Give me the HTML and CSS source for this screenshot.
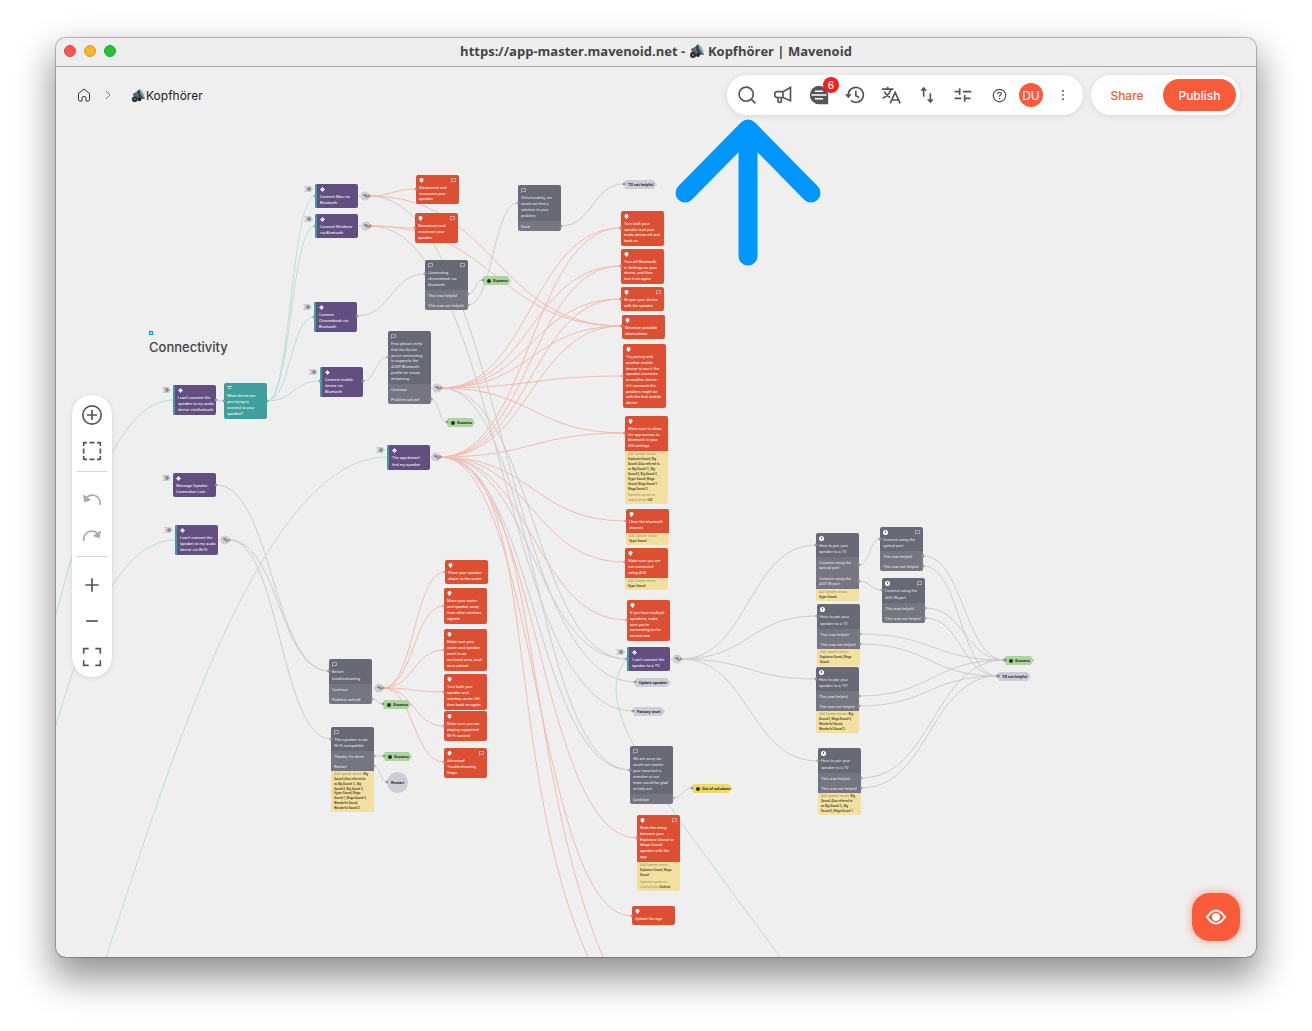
FILE: index.html
```html
<!DOCTYPE html>
<html lang="de">
<head>
<meta charset="UTF-8">
<meta name="viewport" content="width=device-width, initial-scale=1.0">
<title>Kopfhörer | Mavenoid</title>
<link rel="stylesheet" href="styles.css">
</head>
<body>
<svg class="defs" width="0" height="0" aria-hidden="true">
    <symbol id="speaker" viewBox="0 0 16 16">
        <path d="M6 4L9 1L15 12L8 11Z" fill="#3c4a54"/>
        <path d="M9 1Q14 4 15 12Q10 8 9 1Z" fill="#8fa3ae"/>
        <path d="M10 1Q15 4 15 9" fill="none" stroke="#c4e6ee"/>
        <path d="M2 6L6 4L8 11L4 14Z" fill="#59656c"/>
        <circle cx="4" cy="12" r="3" fill="#262c30"/>
        <circle cx="4" cy="12" r="1" fill="#7d878d"/>
        <circle cx="9" cy="12" r="2" fill="#1f2427"/>
    </symbol>
</svg>
<div class="window">
    <div class="titlebar">
        <div class="lights">
            <button class="light close" aria-label="Close"></button>
            <button class="light minimize" aria-label="Minimize"></button>
            <button class="light maximize" aria-label="Maximize"></button>
        </div>
        <div class="title">https://app-master.mavenoid.net - <svg width="16" height="16"><use href="#speaker"/></svg> Kopfhörer | Mavenoid</div>
    </div>

    <div class="workspace">
        <div class="canvas">
            <div class="world">
                <svg class="layer" id="edges" width="1312" height="1031"></svg>
                <div id="nodes"></div>
                <svg class="layer" id="ports" width="1312" height="1031"></svg>
                <h2 class="section-title">Connectivity</h2>
                <svg class="layer" width="1312" height="1031">
                    <rect x="149.500" y="331.500" width="3" height="3" fill="#9bd3ff" stroke="#0096ff"/>
                    <path d="M748 129V256M685 193L748 129L811 193" fill="none" stroke="#0096ff" stroke-width="19" stroke-linecap="round" stroke-linejoin="round"/>
                </svg>
            </div>
        </div>

        <header class="header">
            <nav class="breadcrumb">
                <a href="#" class="home" aria-label="Home">
                    <svg width="14" height="14" viewBox="0 0 14 14"><path d="M1.500 5.500L7 1L12.500 5.500V11.500Q12.500 13 11 13H9V10Q9 8.500 7 8.500Q5 8.500 5 10V13H3Q1.500 13 1.500 11.500Z"/></svg>
                </a>
                <svg class="chevron" width="8" height="10" viewBox="0 0 8 10"><path d="M2 1L6 5L2 9"/></svg>
                <a href="#" class="current"><svg width="15" height="15"><use href="#speaker"/></svg>Kopfhörer</a>
            </nav>
            <div class="tools">
                <button class="tool" aria-label="Search"><svg viewBox="0 0 24 24"><circle cx="11" cy="11" r="8.500"/><path d="M17.500 17.500L22 22"/></svg></button>
                <button class="tool" aria-label="Announcements"><svg viewBox="0 0 24 24"><path d="M21 3V19L12 15H5Q2 15 2 11.500Q2 8 5 8H12ZM12 8V15M6 15V19Q6 21 8 21Q10 21 10 19V15"/></svg></button>
                <button class="tool" aria-label="Comments"><svg viewBox="0 0 24 24"><path class="solid" d="M12 1A11 11 0 1 0 12 23H23V12A11 11 0 0 0 12 1Z"/><path class="cut" d="M7 7.500H17M3 12H21M7 16.500H17"/></svg><span class="badge">6</span></button>
                <button class="tool" aria-label="History"><svg viewBox="0 0 24 24"><path d="M4 12A9 9 0 1 1 7 18.500M13 7V13L17 15"/><path class="solid" d="M0 11H8L4 16Z"/></svg></button>
                <button class="tool" aria-label="Translate"><svg viewBox="0 0 24 24"><path d="M1 5H15M8 2V5M12 5Q10 12 2 16M4 8Q7 13 11 15M11 22L17 9L23 22M13 18H21"/></svg></button>
                <button class="tool" aria-label="Import and export"><svg viewBox="0 0 24 24"><path d="M8 14V4M16 10V20"/><path class="solid" d="M4 7L8 2L12 7ZM12 17L16 22L20 17Z"/></svg></button>
                <button class="tool" aria-label="Settings"><svg viewBox="0 0 24 24"><path d="M2 8H9M8 4V12M12 8H22M2 16H10M14 12V20M14 16H21"/></svg></button>
                <button class="tool small" aria-label="Help"><svg viewBox="0 0 24 24"><circle cx="12" cy="12" r="10"/><path d="M9 10Q9 7 12 7Q15 7 15 9.500Q15 11 12 12.500V14M12 16V18"/></svg></button>
                <button class="avatar">DU</button>
                <button class="tool" aria-label="More"><svg viewBox="0 0 24 24"><path class="solid" d="M11 6h2v2h-2zM11 11h2v2h-2zM11 16h2v2h-2z"/></svg></button>
            </div>
            <div class="actions">
                <button class="share">Share</button>
                <button class="publish">Publish</button>
            </div>
        </header>

        <main class="overlay">
            <div class="sidebar">
                <button class="tool" aria-label="Add"><svg viewBox="0 0 24 24"><circle cx="12" cy="12" r="11"/><path d="M12 6V18M6 12H18"/></svg></button>
                <button class="tool" aria-label="Select area"><svg viewBox="0 0 24 24"><path d="M2 6V2H6M9 2H15M18 2H22V6M22 9V15M22 18V22H18M15 22H9M6 22H2V18M2 15V9"/></svg></button>
                <hr>
                <button class="tool" disabled aria-label="Undo"><svg viewBox="0 0 24 24"><path d="M5 9Q12 4 18 8Q22 11 22 18"/><path class="solid" d="M1 5L3 15L11 12Z"/></svg></button>
                <button class="tool" disabled aria-label="Redo"><svg viewBox="0 0 24 24"><path d="M19 9Q12 4 6 8Q2 11 2 18"/><path class="solid" d="M23 5L21 15L13 12Z"/></svg></button>
                <hr>
                <button class="tool" aria-label="Zoom in"><svg viewBox="0 0 24 24"><path d="M12 4V20M4 12H20"/></svg></button>
                <button class="tool" aria-label="Zoom out"><svg viewBox="0 0 24 24"><path d="M5 12H19"/></svg></button>
                <button class="tool" aria-label="Fit to screen"><svg viewBox="0 0 24 24"><path d="M2 8V2H8M16 2H22V8M22 16V22H16M8 22H2V16"/></svg></button>
            </div>
            <button class="preview" aria-label="Preview"><svg width="20" height="16" viewBox="0 0 20 16"><path d="M1 8Q10 -5 19 8Q10 21 1 8Z" fill="none" stroke="#fff" stroke-width="2"/><circle cx="10" cy="8" r="4" fill="#fff"/></svg></button>
        </main>
    </div>
</div>
<script src="flow.js"></script>
</body>
</html>
```
FILE: styles.css
```css
* {
    box-sizing: border-box;
}
body {
    margin: 0;
    height: 100vh;
    padding: 38px 56px 74px;
    background: #fff;
    font-family: Inter, "Liberation Sans", sans-serif;
    color: #222;
    overflow: hidden;
}
button {
    border: none;
    background: none;
    padding: 0;
    font-family: inherit;
    cursor: pointer;
}
.defs {
    position: absolute;
}
.window {
    height: 100%;
    display: flex;
    flex-direction: column;
    border-radius: 10px;
    background: #efefef;
    overflow: hidden;
    box-shadow: 0 0 1px 1px rgba(0, 0, 0, 0.25), 0 18px 36px 4px rgba(0, 0, 0, 0.42);
}
.titlebar {
    height: 29px;
    display: grid;
    grid-template-columns: 1fr auto 1fr;
    align-items: center;
    padding: 0 8px 2px;
    background: #eee;
    border-bottom: 1px solid #a6a6a6;
}
.lights {
    display: flex;
    gap: 8px;
}
.light {
    width: 12px;
    height: 12px;
    border-radius: 50%;
}
.close {
    background: #ff5350;
    border: 1px solid #e0443e;
}
.minimize {
    background: #fdb42b;
    border: 1px solid #dd9a20;
}
.maximize {
    background: #27c236;
    border: 1px solid #1aaa29;
}
.title {
    display: flex;
    align-items: center;
    font-family: "Open Sans", sans-serif;
    font-size: 13px;
    line-height: 18px;
    font-weight: 700;
    color: #444;
    white-space: pre;
}
.workspace {
    position: relative;
    flex: 1;
    min-height: 0;
    display: flex;
    flex-direction: column;
}

/* flow canvas */
.canvas {
    position: absolute;
    inset: 0;
    overflow: hidden;
}
.world {
    position: absolute;
    left: -56px;
    top: -67px;
}
.layer {
    position: absolute;
    left: 0;
    top: 0;
}
.edge {
    fill: none;
    stroke-width: 1;
}
.edge.teal { stroke: #bbdeda; }
.edge.red { stroke: #f3bcb0; }
.edge.gray { stroke: #cdcdcf; }
.port {
    fill: #ddd;
    stroke: #85858e;
}
.port.teal { stroke: #3f9f9c; }
.port.red { stroke: #dd6a55; }
.section-title {
    position: absolute;
    left: 149px;
    top: 338px;
    margin: 0;
    font-size: 13px;
    line-height: 18px;
    font-weight: 500;
    color: #444;
}
.node {
    position: absolute;
    width: 43px;
    border-radius: 2px;
    overflow: hidden;
    font-family: Roboto, sans-serif;
    font-size: 4px;
    line-height: 5px;
    color: #fff;
    white-space: nowrap;
}
.head {
    position: relative;
    display: flex;
    flex-direction: column;
    justify-content: space-between;
    padding: 10px 3px 3px;
}
.purple .head { background: #624e80; }
.entry .head {
    border-left: 2px solid #3c9d9b;
}
.tealbox .head { background: #3f9f9c; }
.redbox .head { background: #dc4f33; }
.graybox .head {
    background: #686975;
    color: #e6e6ea;
}
.glyph {
    position: absolute;
    left: 3px;
    top: 3px;
}
.extra {
    position: absolute;
    right: 3px;
    top: 3px;
}
.option {
    display: flex;
    flex-direction: column;
    justify-content: center;
    padding: 0 3px;
    background: #767681;
    color: #e6e6ea;
}
.note {
    display: flex;
    flex-direction: column;
    justify-content: space-between;
    padding: 1px 3px 2px;
    background: #f2e0a0;
    color: #5d542f;
    font-size: 3px;
    line-height: 4px;
    font-weight: 700;
}
.note i {
    font-style: normal;
    font-weight: 400;
    color: #a0935f;
}
.pill {
    position: absolute;
    height: 9px;
    display: flex;
    align-items: center;
    gap: 2px;
    padding-left: 4px;
    font-family: Roboto, sans-serif;
    font-size: 4px;
    font-weight: 700;
    color: #26292e;
    white-space: nowrap;
    clip-path: polygon(3% 0, 88% 0, 100% 50%, 88% 100%, 3% 100%, 0 50%);
}
.pill.green { background: #abd699; }
.pill.yellow { background: #eedb66; }
.pill.silver { background: #cbced6; }
.pill.green::before,
.pill.yellow::before {
    content: "";
    width: 4px;
    height: 4px;
    border-radius: 50%;
    background: #26331f;
}
.pill.round {
    width: 21px;
    height: 21px;
    padding: 0;
    justify-content: center;
    clip-path: circle(50%);
}
.tag {
    position: absolute;
    width: 9px;
    height: 6px;
    background: #cbced6;
    clip-path: polygon(0 0, 75% 0, 100% 50%, 75% 100%, 0 100%, 15% 50%);
}
.tag svg {
    display: block;
    margin: 1px 0 0 3px;
}

/* floating controls */
.header {
    position: relative;
    display: flex;
    align-items: center;
    gap: 8px;
    padding: 8px 16px 0 21px;
}
.breadcrumb {
    flex: 1;
    display: flex;
    align-items: center;
    font-size: 12px;
}
.breadcrumb a {
    display: flex;
    align-items: center;
    color: #222;
    text-decoration: none;
}
.home svg,
.chevron {
    fill: none;
    stroke: #333;
}
.breadcrumb .chevron {
    margin: 0 19px 0 13px;
    stroke: #777;
}
.tools,
.actions,
.sidebar {
    display: flex;
    background: #fff;
    border-radius: 20px;
    box-shadow: 0 1px 6px rgba(0, 0, 0, 0.1);
}
.tools {
    height: 40px;
    padding: 2px;
    align-items: center;
}
.tool {
    position: relative;
    width: 36px;
    height: 36px;
    display: flex;
    align-items: center;
    justify-content: center;
}
.tool svg {
    width: 20px;
    height: 20px;
    fill: none;
    stroke: #555;
    stroke-width: 2;
}
.tool.small svg {
    width: 15px;
    height: 15px;
}
.tool .solid {
    fill: #555;
    stroke: none;
}
.tool .cut {
    stroke: #fff;
}
.tool:disabled svg {
    stroke: #aaa;
}
.tool:disabled .solid {
    fill: #aaa;
}
.badge {
    position: absolute;
    left: 22px;
    top: 0;
    width: 16px;
    height: 16px;
    border-radius: 50%;
    background: #fb1c1c;
    color: #fff;
    font-size: 10px;
    line-height: 16px;
    font-weight: 500;
}
.avatar {
    width: 24px;
    height: 24px;
    margin: 0 2px;
    border-radius: 50%;
    background: #fa5b3b;
    color: #fff;
    font-size: 12px;
}
.actions {
    height: 40px;
    padding: 4px;
}
.share,
.publish {
    font-size: 12px;
    font-weight: 500;
    border-radius: 16px;
}
.share {
    width: 68px;
    color: #fa5b3b;
    padding-right: 4px;
}
.publish {
    width: 73px;
    background: #fa5b3b;
    color: #fff;
}
.overlay {
    position: relative;
    flex: 1;
    display: flex;
    align-items: center;
    justify-content: space-between;
    padding: 0 16px;
}
.sidebar {
    width: 40px;
    flex-direction: column;
    align-items: center;
    padding: 2px;
}
.sidebar hr {
    width: 30px;
    height: 1px;
    margin: 2px 0 10px;
    border: none;
    background: #d6d6d6;
}
.preview {
    align-self: flex-end;
    width: 48px;
    height: 48px;
    margin-bottom: 16px;
    border-radius: 18px;
    background: #fa5b3b;
    box-shadow: 0 0 8px rgba(250, 91, 59, 0.6);
    display: flex;
    align-items: center;
    justify-content: center;
}
```
FILE: flow.js
```js
// kind, x, y, head height, head text, extras
var nodes = [
    ["purple entry", 315, 184, 24, "Connect Mac via|Bluetooth"],
    ["purple entry", 315, 214, 24, "Connect Windows|via Bluetooth"],
    ["purple entry", 314, 302, 30, "Connect|Chromebook via|Bluetooth"],
    ["purple entry", 320, 367, 30, "Connect mobile|device via|Bluetooth"],
    ["purple entry", 387, 445, 25, "The app doesn't|find my speaker"],
    ["purple entry", 173, 385, 30, "I can't connect the|speaker to my audio|device via bluetooth"],
    ["purple", 173, 473, 24, "Message Speaker|Connection Lost"],
    ["purple entry", 175, 525, 30, "I can't connect the|speaker to my audio|device via Wi-Fi"],
    ["purple entry", 627, 647, 24, "I can't connect the|speaker to a TV"],
    ["tealbox", 224, 383, 36, "What device are|you trying to|connect to your|speaker?"],

    ["redbox", 416, 175, 29, "Disconnect and|reconnect your|speaker", {extra: true}],
    ["redbox", 415, 213, 30, "Disconnect and|reconnect your|speaker", {extra: true}],
    ["redbox", 621, 211, 35, "Turn both your|speaker and your|audio device off and|back on"],
    ["redbox", 621, 249, 35, "Turn off Bluetooth|in Settings on your|device, and then|turn it on again"],
    ["redbox", 621, 287, 24, "Re-pair your device|with the speaker", {extra: true}],
    ["redbox", 622, 315, 24, "Minimize possible|obstructions"],
    ["redbox", 623, 344, 64, "Try pairing with|another mobile|device to see if the|speaker connects|to another device -|if it connects the|problem might be|with the first mobile|device"],
    ["redbox", 625, 416, 35, "Make sure to allow|the app access to|bluetooth in your|iOS settings", {note: [53, "<i>Add: Speaker version:</i>|Explosive Sound, Big|Sound (Also referred to|as Big Sound 1), Big|Sound 2, Big Sound 3,|Hyper Sound, Mega|Sound, Mega Sound 1|Mega Sound 2||<i>Operative system on</i>|<i>mobile phone:</i> iOS"]}],
    ["redbox", 626, 509, 24, "Clear the bluetooth|channel", {note: [12, "<i>Add: Speaker version:</i>|Hyper Sound"]}],
    ["redbox", 625, 548, 30, "Make sure you are|not connected|using AUX", {note: [12, "<i>Add: Speaker version:</i>|Hyper Sound"]}],
    ["redbox", 627, 600, 41, "If you have multiple|speakers, make|sure you're|connecting to the|correct one"],
    ["redbox", 637, 815, 47, "Redo the setup|between your|Explosive Sound or|Mega Sound|speaker with the|app", {extra: true, note: [29, "<i>Add: Speaker version:</i>|Explosive Sound, Mega|Sound||<i>Operative system on</i>|<i>mobile phone:</i> Android"]}],
    ["redbox", 632, 906, 19, "Update the app"],
    ["redbox", 445, 560, 24, "Place your speaker|closer to the router"],
    ["redbox", 444, 588, 36, "Move your router|and speaker away|from other wireless|signals"],
    ["redbox", 444, 629, 42, "Make sure your|router and speaker|aren't in an|enclosed area, such|as a cabinet"],
    ["redbox", 444, 674, 36, "Turn both your|speaker and|wireless router Off,|then back on again"],
    ["redbox", 444, 711, 30, "Make sure you are|playing supported|Wi-Fi content"],
    ["redbox", 444, 748, 30, "Advanced|Troubleshooting|Steps", {extra: true}],

    ["graybox", 518, 185, 36, "Unfortunately, we|could not find a|solution to your|problem", {options: ["Done"]}],
    ["graybox", 425, 260, 30, "Connecting|chromebook via|bluetooth", {extra: true, options: ["This was helpful", "This was not helpful"]}],
    ["graybox", 388, 331, 53, "First please verify|that the device|you're connecting|to supports the|A2DP Bluetooth|profile for music|streaming.", {options: ["Continue", "Problem solved!"]}],
    ["graybox", 329, 659, 25, "Before|troubleshooting", {options: ["Continue", "Problem solved!"]}],
    ["graybox", 331, 727, 24, "This speaker is not|Wi-Fi compatible", {options: ["Thanks, I'm done", "Restart"], note: [41, "<i>Add: Speaker version:</i> Big|Sound (Also referred to|as Big Sound 1), Big|Sound 2, Big Sound 3,|Hyper Sound, Mega|Sound 1, Mega Sound 2,|Wonderful Sound,|Wonderful Sound 2"]}],
    ["graybox", 630, 746, 48, "We are sorry we|could not resolve|your issue but a|member of our|team would be glad|to help out", {options: ["Continue"]}],
    ["graybox", 816, 533, 24, "How to pair your|speaker to a TV", {round: true, options: ["Connect using the|optical port", "Connect using the|AUX IN port"], note: [12, "<i>Add: Speaker version:</i>|Hyper Sound"]}],
    ["graybox", 817, 604, 25, "How to pair your|speaker to a TV", {round: true, options: ["This was helpful", "This was not helpful"], note: [17, "<i>Add: Speaker version:</i>|Explosive Sound, Mega|Sound"]}],
    ["graybox", 816, 667, 24, "How to pair your|speaker to a TV!", {round: true, options: ["This was helpful", "This was not helpful"], note: [22, "<i>Add: Speaker version:</i> Big|Sound 3, Mega Sound 3,|Wonderful Sound,|Wonderful Sound 2"]}],
    ["graybox", 818, 748, 25, "How to pair your|speaker to a TV", {round: true, options: ["This was helpful", "This was not helpful"], note: [22, "<i>Add: Speaker version:</i> Big|Sound (Also referred to|as Big Sound 1), Big|Sound 2, Mega Sound 1"]}],
    ["graybox", 880, 527, 24, "Connect using the|optical port", {round: true, extra: true, options: ["This was helpful", "This was not helpful"]}],
    ["graybox", 882, 578, 25, "Connect using the|AUX IN port", {round: true, extra: true, options: ["This was helpful", "This was not helpful"]}]
];

// color, x, y, width, label
var pills = [
    ["green", 483, 276, 28, "Success"],
    ["green", 447, 418, 28, "Success"],
    ["green", 383, 700, 28, "Success"],
    ["green", 384, 752, 28, "Success"],
    ["green", 1005, 656, 29, "Success"],
    ["yellow", 692, 784, 41, "Out of solutions"],
    ["silver", 624, 180, 33, "TS not helpful"],
    ["silver", 998, 672, 33, "TS not helpful"],
    ["silver", 635, 678, 36, "Update speaker"],
    ["silver", 633, 707, 32, "Factory reset"],
    ["silver round", 387, 772, 21, "Restart"]
];

var hubs = [[365, 196], [366, 226], [437, 388], [436, 457], [225, 540], [379, 688], [677, 659]];

// color, from x, from y, list of targets
var edges = [
    ["teal", 267, 401, [[315, 196], [315, 226], [314, 317], [320, 381]]],
    ["gray", 369, 196, [[635, 682]]],
    ["gray", 370, 226, [[633, 711]]],
    ["red", 369, 196, [[416, 189], [622, 326]]],
    ["red", 370, 226, [[415, 228], [622, 326]]],
    ["gray", 441, 388, [[627, 659], [630, 770]]],
    ["gray", 440, 457, [[627, 659], [630, 770]]],
    ["red", 441, 388, [[621, 228], [621, 266], [621, 299], [622, 326], [623, 376], [625, 433]]],
    ["red", 440, 457, [[621, 228], [621, 266], [621, 299], [622, 326], [625, 433], [626, 521], [625, 562], [627, 620], [637, 838], [632, 916]]],
    ["red", 383, 688, [[445, 572], [444, 606], [444, 650], [444, 692], [444, 726], [444, 762]]],
    ["gray", 216, 400, [[224, 401]]],
    ["gray", 216, 485, [[329, 671]]],
    ["gray", 229, 540, [[329, 671], [331, 739]]],
    ["gray", 357, 316, [[425, 274]]],
    ["gray", 363, 381, [[388, 357]]],
    ["gray", 468, 294, [[483, 280]]],
    ["gray", 468, 305, [[518, 203]]],
    ["gray", 561, 226, [[624, 184]]],
    ["gray", 431, 399, [[447, 422]]],
    ["gray", 372, 699, [[383, 704]]],
    ["gray", 374, 756, [[384, 756]]],
    ["gray", 374, 766, [[387, 782]]],
    ["gray", 681, 659, [[816, 545], [817, 616], [816, 679], [818, 761]]],
    ["gray", 673, 798, [[692, 788]]],
    ["gray", 859, 565, [[880, 539]]],
    ["gray", 859, 581, [[882, 590]]],
    ["gray", 923, 556, [[1005, 660]]],
    ["gray", 923, 566, [[998, 676]]],
    ["gray", 925, 608, [[1005, 660]]],
    ["gray", 925, 618, [[998, 676]]],
    ["gray", 860, 634, [[1005, 660]]],
    ["gray", 860, 644, [[998, 676]]],
    ["gray", 859, 696, [[1005, 660]]],
    ["gray", 859, 706, [[998, 676]]],
    ["gray", 861, 778, [[1005, 660]]],
    ["gray", 861, 788, [[998, 676]]]
];

// edges that leave the visible part of the canvas
var longEdges = [
    ["teal", "M30 720C60 600 100 400 173 400"],
    ["teal", "M46 760C76 650 115 540 175 540"],
    ["teal", "M106 957C165 780 260 457 387 457"],
    ["teal", "M627 659C600 690 625 740 680 821L780 957"],
    ["red", "M440 457C540 457 500 760 588 957"],
    ["red", "M440 457C540 457 520 760 603 957"]
];

var glyphs = {
    purple: '<path d="M2 0h1v1h1v1h1v1h-1v1h-1v1h-1v-1h-1v-1h-1v-1h1v-1h1z" fill="#fff" fill-opacity="0.8"/>',
    tealbox: '<path d="M0 0h5v1h-5zM1 2h3v1h-3z" fill="#fff" fill-opacity="0.7"/>',
    redbox: '<circle cx="2.5" cy="2" r="2" fill="#fff"/><path d="M2 3h1v2h-1z" fill="#fff"/>',
    graybox: '<path d="M0.5 0.5h4v3h-3l-1 1z" fill="none" stroke="#c4c4ca" stroke-width="0.7"/>',
    round: '<circle cx="2.5" cy="2.5" r="2.5" fill="#fff"/><path d="M2 1h1v2h-1z" fill="#686975"/>'
};

function lines(text) {
    return text.split("|").map(function(line) {
        return "<span>" + line + "</span>";
    }).join("");
}

function icon(name, className) {
    return '<svg class="' + className + '" width="5" height="5">' + glyphs[name] + "</svg>";
}

var html = "";
nodes.forEach(function(n) {
    var opts = n[5] || {};
    var kind = n[0].split(" ")[0];
    if (kind === "purple") {
        html += '<div class="tag" style="left:' + (n[1] - 11) + "px;top:" + (n[2] + 2) + 'px"><svg width="4" height="4"><circle cx="2" cy="2" r="1.3" fill="none" stroke="#555" stroke-width="0.8"/></svg></div>';
    }
    html += '<div class="node ' + n[0] + '" style="left:' + n[1] + "px;top:" + n[2] + 'px">';
    html += '<div class="head" style="height:' + n[3] + 'px">' + icon(opts.round ? "round" : kind, "glyph");
    if (opts.extra) {
        html += icon("graybox", "extra");
    }
    html += lines(n[4]) + "</div>";
    (opts.options || []).forEach(function(option) {
        var height = option.indexOf("|") > 0 ? 16 : 10;
        html += '<div class="option" style="height:' + height + 'px">' + lines(option) + "</div>";
    });
    if (opts.note) {
        html += '<div class="note" style="height:' + opts.note[0] + 'px">' + lines(opts.note[1]) + "</div>";
    }
    html += "</div>";
});
pills.forEach(function(p) {
    html += '<div class="pill ' + p[0] + '" style="left:' + p[1] + "px;top:" + p[2] + "px;width:" + p[3] + 'px">' + p[4] + "</div>";
});
document.getElementById("nodes").innerHTML = html;

var paths = "";
var ports = "";

function port(color, x, y) {
    ports += '<circle class="port ' + color + '" cx="' + x + '" cy="' + y + '" r="1"/>';
}

longEdges.forEach(function(e) {
    paths += '<path class="edge ' + e[0] + '" d="' + e[1] + '"/>';
});
hubs.forEach(function(h) {
    paths += '<path class="edge gray" d="M' + (h[0] - 8) + " " + h[1] + "h8" + '"/>';
    ports += '<circle cx="' + h[0] + '" cy="' + h[1] + '" r="4.5" fill="#cbced6"/>';
    ports += '<path d="M' + (h[0] - 2) + " " + (h[1] - 1) + 'h4m-3 0l2 2h2" fill="none" stroke="#555" stroke-width="0.8"/>';
});
edges.forEach(function(e) {
    port(e[0], e[1], e[2]);
    e[3].forEach(function(to) {
        var mid = (e[1] + to[0]) / 2;
        paths += '<path class="edge ' + e[0] + '" d="M' + e[1] + " " + e[2] + "C" + mid + " " + e[2] + " " + mid + " " + to[1] + " " + to[0] + " " + to[1] + '"/>';
        port(e[0], to[0], to[1]);
    });
});
document.getElementById("edges").innerHTML = paths;
document.getElementById("ports").innerHTML = ports;
```
